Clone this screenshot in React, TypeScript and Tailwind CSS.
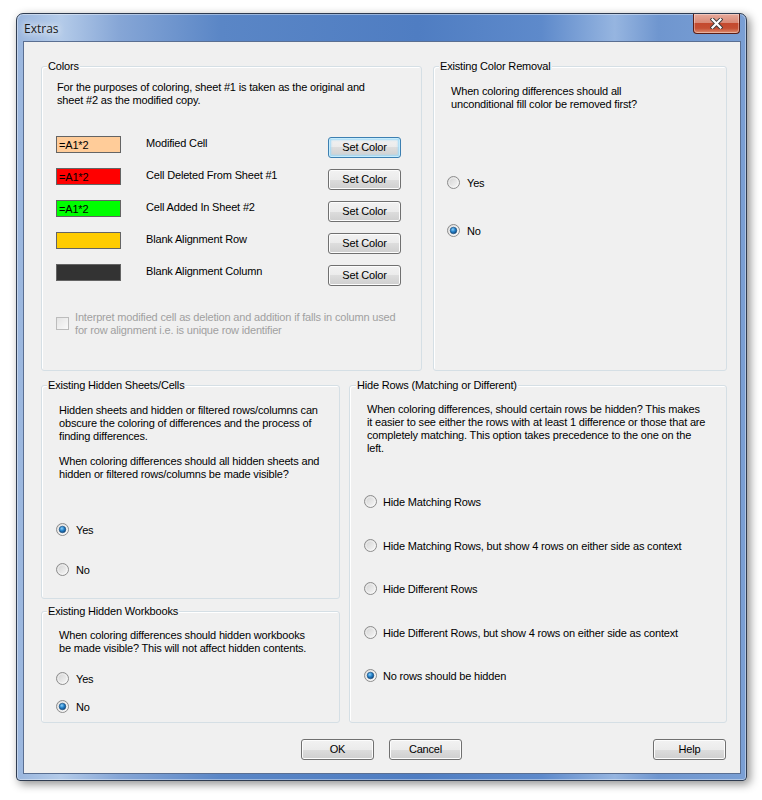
import React from "react";

function Radio({ checked }: { checked?: boolean }) {
  return (
    <svg width="13" height="13" viewBox="0 0 13 13" className="shrink-0">
      <defs>
        <linearGradient id="rgray" x1="0" y1="0" x2="1" y2="1">
          <stop offset="0" stopColor="#cfcfcf" />
          <stop offset="1" stopColor="#fbfbfb" />
        </linearGradient>
        <radialGradient id="rblue" cx="0.4" cy="0.35" r="0.75">
          <stop offset="0" stopColor="#8fd0f6" />
          <stop offset="0.45" stopColor="#2583cc" />
          <stop offset="1" stopColor="#0a3566" />
        </radialGradient>
      </defs>
      <circle cx="6.5" cy="6.5" r="6" fill="url(#rgray)" stroke="#8d8d8d" strokeWidth="1" />
      <circle cx="6.5" cy="6.5" r="4.6" fill="none" stroke="#ffffff" strokeOpacity="0.6" strokeWidth="0.8" />
      {checked && <circle cx="6.5" cy="6.5" r="3.3" fill="url(#rblue)" stroke="#1b4f7e" strokeWidth="0.6" />}
    </svg>
  );
}

function WinButton({ label, focused }: { label: string; focused?: boolean }) {
  return (
    <div
      className={
        focused
          ? "w-[73px] h-[21px] shrink-0 flex items-center justify-center rounded-[3px] border border-[#3c7fb1] bg-[linear-gradient(180deg,#f2f2f2_0%,#ebebeb_50%,#dddddd_50%,#cfcfcf_100%)] shadow-[inset_0_0_0_1px_#c6ecfc,inset_0_0_2px_2px_#9fdaf8] text-[11px] leading-[13px] text-black"
          : "w-[73px] h-[21px] shrink-0 flex items-center justify-center rounded-[3px] border border-[#707070] bg-[linear-gradient(180deg,#f2f2f2_0%,#ebebeb_50%,#dddddd_50%,#cfcfcf_100%)] shadow-[inset_0_0_0_1px_#fcfcfc] text-[11px] leading-[13px] text-black"
      }
    >
      {label}
    </div>
  );
}

function GroupTitle({ children, ml }: { children: React.ReactNode; ml?: string }) {
  return (
    <span
      className={
        (ml ?? "ml-[5px]") +
        " self-start -mt-[7px] px-[1px] bg-[#f0f0f0] leading-[13px] whitespace-nowrap text-black"
      }
    >
      {children}
    </span>
  );
}

const boxCls =
  "flex flex-col border border-[#d5dfe5] rounded-[3px] shadow-[inset_1px_1px_0_#ffffff]";

function ColorRow({
  bg,
  text,
  label,
  focused,
}: {
  bg: string;
  text?: string;
  label: string;
  focused?: boolean;
}) {
  return (
    <div className="flex items-start h-[32px]">
      <div className={"w-[65px] h-[17px] shrink-0 border border-[#646464] pl-[2px] pt-[1px] leading-[15px] text-black " + bg}>
        {text}
      </div>
      <div className="ml-[25px] w-[182px] pt-[1px] leading-[13px] whitespace-nowrap">{label}</div>
      <div className="mt-[1px]">
        <WinButton label="Set Color" focused={focused} />
      </div>
    </div>
  );
}

function RadioRow({ label, checked, mt, gap }: { label: string; checked?: boolean; mt: string; gap?: string }) {
  return (
    <div className={"flex items-center h-[13px] " + mt}>
      <Radio checked={checked} />
      <span className={(gap ?? "ml-[7px]") + " pt-[1px] leading-[13px] whitespace-nowrap"}>{label}</span>
    </div>
  );
}

export default function App() {
  return (
    <div className="w-[762px] h-[800px] bg-white pt-[13px] pl-[16px] font-['Liberation_Sans',Arial,sans-serif] text-[11px] tracking-[-0.17px] text-black">
      {/* Window */}
      <div className="w-[731px] h-[768px] flex flex-col border border-[#2f3c51] rounded-t-[7px] rounded-b-[4px] bg-[linear-gradient(90deg,#9ab6de_0%,#b4cbe9_6%,#86a6d6_14%,#5a86c6_28%,#4f7dc2_55%,#5e8acb_72%,#96b5e0_82%,#6f96cf_88%,#7a9fd4_100%)] shadow-[inset_0_0_0_1px_rgba(255,255,255,0.4),3px_3px_10px_rgba(0,0,0,0.45)]">
        {/* Title bar */}
        <div className="h-[27px] shrink-0 flex items-start justify-between">
          <div className="h-[27px] flex items-center pl-[7px] pt-[2px] text-[12px] tracking-normal font-['Open_Sans',sans-serif] text-[#1a1a1a] [text-shadow:0_0_6px_#ffffff,0_0_10px_rgba(255,255,255,0.9)]">
            Extras
          </div>
          <div className="mr-[6px] w-[47px] h-[20px] flex items-center justify-center border border-t-0 border-[#5b1d15] rounded-b-[4px] bg-[linear-gradient(180deg,#e8aa9b_0%,#d98a77_45%,#c4492e_50%,#c54f33_75%,#dd8c70_100%)] shadow-[inset_0_0_0_1px_rgba(255,255,255,0.35)]">
            <svg width="13" height="11" viewBox="0 0 13 11">
              <path d="M2.5 1.5 L10.5 9.5 M10.5 1.5 L2.5 9.5" stroke="#3a3a3a" strokeWidth="4" strokeLinecap="square" />
              <path d="M2.5 1.5 L10.5 9.5 M10.5 1.5 L2.5 9.5" stroke="#ffffff" strokeWidth="2.2" strokeLinecap="square" />
            </svg>
          </div>
        </div>

        {/* Client area */}
        <div className="ml-[6px] w-[718px] h-[733px] border border-[#5a6f92] bg-[#f0f0f0] flex flex-col">
          {/* Top row */}
          <div className="mt-[24px] pl-[17px] flex gap-[11px]">
            {/* Colors */}
            <div className={boxCls + " w-[381px] h-[305px]"}>
              <GroupTitle>Colors</GroupTitle>
              <div className="pl-[14px] flex flex-col">
                <div className="mt-[8px] ml-[1px] leading-[13px] whitespace-nowrap">
                  For the purposes of coloring, sheet #1 is taken as the original and
                  <br />
                  sheet #2 as the modified copy.
                </div>
                <div className="mt-[29px] flex flex-col">
                  <ColorRow bg="bg-[#ffcc99]" text="=A1*2" label="Modified Cell" focused />
                  <ColorRow bg="bg-[#ff0000]" text="=A1*2" label="Cell Deleted From Sheet #1" />
                  <ColorRow bg="bg-[#00ff00]" text="=A1*2" label="Cell Added In Sheet #2" />
                  <ColorRow bg="bg-[#ffcc00]" label="Blank Alignment Row" />
                  <ColorRow bg="bg-[#333333]" label="Blank Alignment Column" />
                </div>
                <div className="mt-[14px] flex items-center">
                  <div className="w-[13px] h-[13px] shrink-0 border border-[#bcbcbc] bg-[linear-gradient(135deg,#e4e4e4,#fafafa)]" />
                  <div className="ml-[6px] pt-[1px] leading-[13px] whitespace-nowrap text-[#a0a0a0]">
                    Interpret modified cell as deletion and addition if falls in column used
                    <br />
                    for row alignment i.e. is unique row identifier
                  </div>
                </div>
              </div>
            </div>

            {/* Existing Color Removal */}
            <div className={boxCls + " w-[294px] h-[305px]"}>
              <GroupTitle>Existing Color Removal</GroupTitle>
              <div className="flex flex-col">
                <div className="mt-[12px] pl-[17px] leading-[13px] whitespace-nowrap">
                  When coloring differences should all
                  <br />
                  unconditional fill color be removed first?
                </div>
                <div className="pl-[13px] flex flex-col">
                  <RadioRow label="Yes" mt="mt-[65px]" />
                  <RadioRow label="No" checked mt="mt-[35px]" />
                </div>
              </div>
            </div>
          </div>

          {/* Bottom row */}
          <div className="mt-[14px] pl-[17px] flex gap-[9px]">
            <div className="w-[299px] flex flex-col">
              {/* Existing Hidden Sheets/Cells */}
              <div className={boxCls + " h-[214px]"}>
                <GroupTitle>Existing Hidden Sheets/Cells</GroupTitle>
                <div className="flex flex-col">
                  <div className="mt-[12px] pl-[17px] leading-[13px] whitespace-nowrap">
                    Hidden sheets and hidden or filtered rows/columns can
                    <br />
                    obscure the coloring of differences and the process of
                    <br />
                    finding differences.
                  </div>
                  <div className="mt-[12px] pl-[17px] leading-[13px] whitespace-nowrap">
                    When coloring differences should all hidden sheets and
                    <br />
                    hidden or filtered rows/columns be made visible?
                  </div>
                  <div className="pl-[14px] flex flex-col">
                    <RadioRow label="Yes" checked mt="mt-[42px]" />
                    <RadioRow label="No" mt="mt-[27px]" />
                  </div>
                </div>
              </div>

              {/* Existing Hidden Workbooks */}
              <div className={boxCls + " mt-[12px] h-[112px]"}>
                <GroupTitle>Existing Hidden Workbooks</GroupTitle>
                <div className="flex flex-col">
                  <div className="mt-[11px] pl-[17px] leading-[13px] whitespace-nowrap">
                    When coloring differences should hidden workbooks
                    <br />
                    be made visible? This will not affect hidden contents.
                  </div>
                  <div className="pl-[14px] flex flex-col">
                    <RadioRow label="Yes" mt="mt-[17px]" />
                    <RadioRow label="No" checked mt="mt-[15px]" />
                  </div>
                </div>
              </div>
            </div>

            {/* Hide Rows */}
            <div className={boxCls + " w-[378px] h-[338px]"}>
              <GroupTitle ml="ml-[6px]">Hide Rows (Matching or Different)</GroupTitle>
              <div className="flex flex-col">
                <div className="mt-[11px] pl-[17px] leading-[13px] whitespace-nowrap">
                  When coloring differences, should certain rows be hidden? This makes
                  <br />
                  it easier to see either the rows with at least 1 difference or those that are
                  <br />
                  completely matching. This option takes precedence to the one on the
                  <br />
                  left.
                </div>
                <div className="pl-[14px] flex flex-col">
                  <RadioRow label="Hide Matching Rows" mt="mt-[40px]" gap="ml-[6px]" />
                  <RadioRow label="Hide Matching Rows, but show 4 rows on either side as context" mt="mt-[31px]" gap="ml-[6px]" />
                  <RadioRow label="Hide Different Rows" mt="mt-[30px]" gap="ml-[6px]" />
                  <RadioRow label="Hide Different Rows, but show 4 rows on either side as context" mt="mt-[31px]" gap="ml-[6px]" />
                  <RadioRow label="No rows should be hidden" checked mt="mt-[30px]" gap="ml-[6px]" />
                </div>
              </div>
            </div>
          </div>

          {/* Buttons */}
          <div className="mt-[16px] pl-[277px] pr-[14px] flex">
            <WinButton label="OK" />
            <div className="ml-[15px]">
              <WinButton label="Cancel" />
            </div>
            <div className="ml-auto">
              <WinButton label="Help" />
            </div>
          </div>
        </div>
      </div>
    </div>
  );
}
